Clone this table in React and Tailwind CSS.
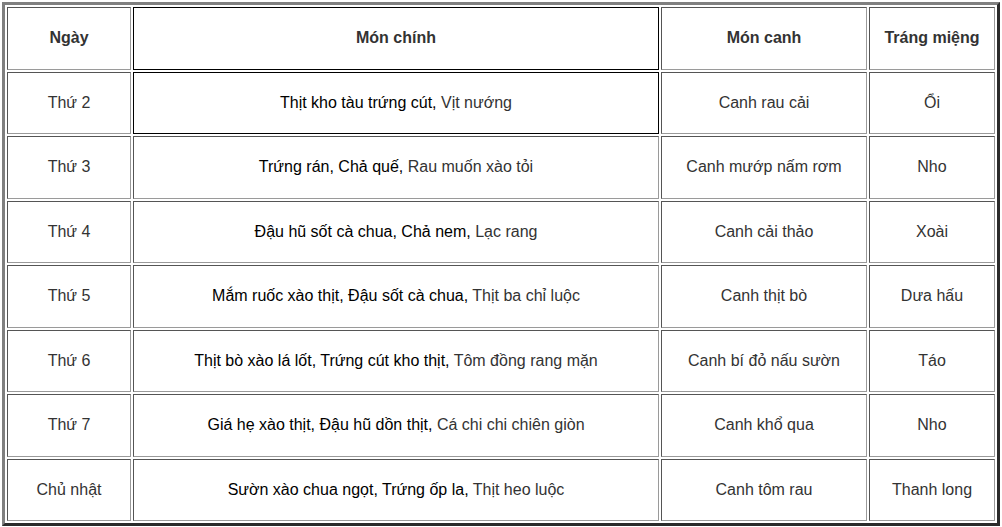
import React from 'react';

// Weekly menu: [day, main dishes (dark part, light part), soup, dessert]
const ROWS = [
  ['Thứ 2', 'Thịt kho tàu trứng cút,', 'Vịt nướng', 'Canh rau cải', 'Ổi'],
  ['Thứ 3', 'Trứng rán, Chả quế,', 'Rau muốn xào tỏi', 'Canh mướp nấm rơm', 'Nho'],
  ['Thứ 4', 'Đậu hũ sốt cà chua, Chả nem,', 'Lạc rang', 'Canh cải thảo', 'Xoài'],
  ['Thứ 5', 'Mắm ruốc xào thịt, Đậu sốt cà chua,', 'Thịt ba chỉ luộc', 'Canh thịt bò', 'Dưa hấu'],
  ['Thứ 6', 'Thịt bò xào lá lốt, Trứng cút kho thịt,', 'Tôm đồng rang mặn', 'Canh bí đỏ nấu sườn', 'Táo'],
  ['Thứ 7', 'Giá hẹ xào thịt, Đậu hũ dồn thịt,', 'Cá chi chi chiên giòn', 'Canh khổ qua', 'Nho'],
  ['Chủ nhật', 'Sườn xào chua ngọt, Trứng ốp la,', 'Thịt heo luộc', 'Canh tôm rau', 'Thanh long'],
];

const cell =
  'h-[62.5px] border border-t-[#555] border-l-[#555] border-b-[#9a9a9a] border-r-[#9a9a9a] text-center align-middle p-0';
const blackCell = 'h-[62.5px] border border-black text-center align-middle p-0';

export default function App() {
  return (
    <div className="bg-white w-[1002px] h-[527px] pt-[2px] pl-[2px]" style={{ fontFamily: '"Liberation Sans", Arial, sans-serif' }}>
      <table
        className="w-[998px] border-separate border-spacing-[2px] border-[3px] border-t-[#808080] border-l-[#808080] border-b-[#2b2b2b] border-r-[#2b2b2b] text-[16px] text-[#333]"
      >
        <colgroup>
          <col className="w-[124px]" />
          <col className="w-[526px]" />
          <col className="w-[206px]" />
          <col />
        </colgroup>
        <thead>
          <tr>
            <th className={`${cell} font-bold`}>Ngày</th>
            <th className={`${blackCell} font-bold`}>Món chính</th>
            <th className={`${cell} font-bold`}>Món canh</th>
            <th className={`${cell} font-bold`}>Tráng miệng</th>
          </tr>
        </thead>
        <tbody>
          {ROWS.map(([day, mainDark, mainLight, soup, dessert], i) => (
            <tr key={day}>
              <td className={cell}>{day}</td>
              <td className={i === 0 ? blackCell : cell}>
                <span className="text-black">{mainDark}</span> {mainLight}
              </td>
              <td className={cell}>{soup}</td>
              <td className={cell}>{dessert}</td>
            </tr>
          ))}
        </tbody>
      </table>
    </div>
  );
}
